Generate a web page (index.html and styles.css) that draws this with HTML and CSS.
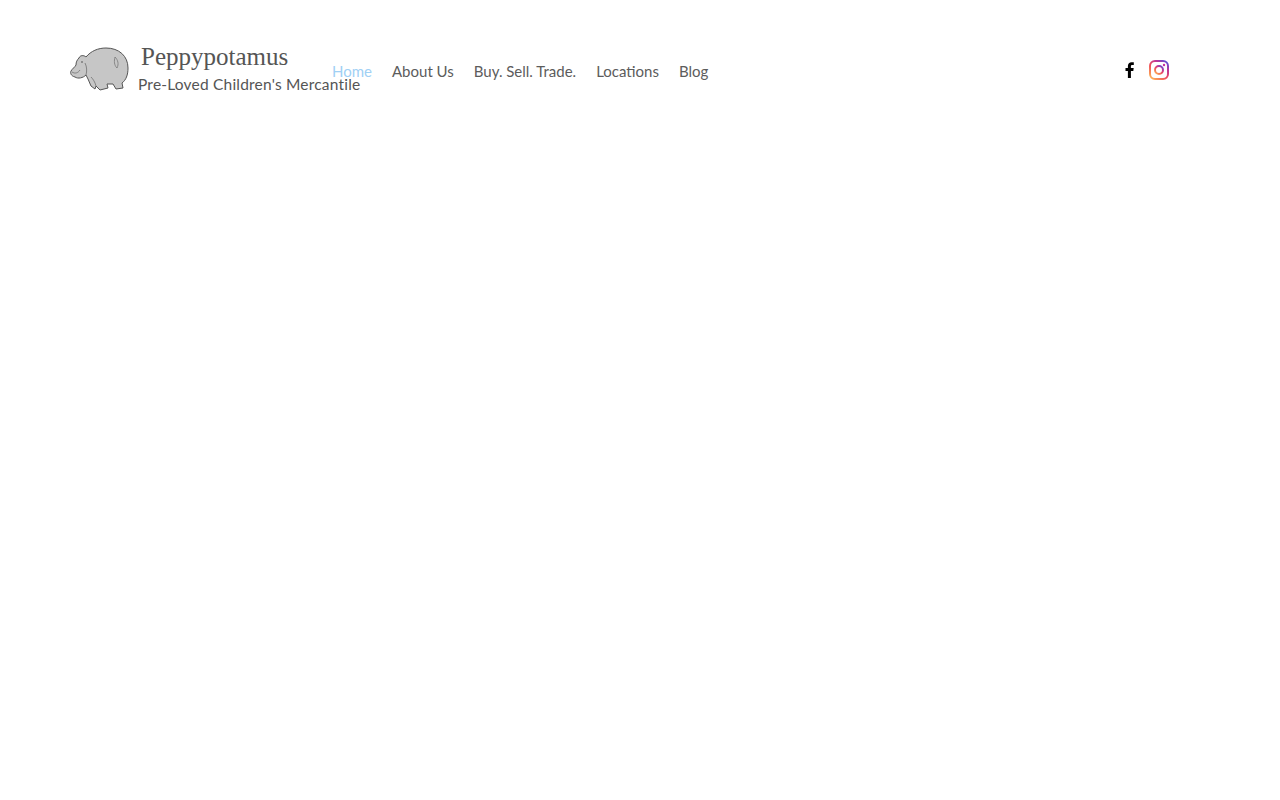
FILE: index.html
```html
<!DOCTYPE html>
<html>
<head>
    <title>Peppypotamus</title>
    <link rel="stylesheet" href="styles.css">
</head>
<body>
    <header class="site-header">
        <svg class="logo" width="60" height="44" viewBox="0 0 60 44">
            <path d="M9 11 C10 8 14 8 16 10 C21 4 28 1 36 1 C49 1 58 9 58 21 C58 28 56 33 52 36 L53 41 L46 42 L43 37 L37 37 L38 41 L30 43 L26 39 L25 42 L21 39 L18 32 L16 28 C13 31 8 32 5 30 C1 29 0 26 1 24 C2 22 5 20 6 18 C6 15 7 13 9 11 Z" fill="#c6c6c6" stroke="#555" stroke-width="1" stroke-linejoin="round"/>
            <path d="M45 10 C48 13 49 17 47 21 C44 18 44 14 45 10 Z" fill="none" stroke="#777" stroke-width="0.8"/>
            <path d="M2 25 C5 27 8 26 10 23 M16 28 C17 24 17 20 15 16 M26 39 C25 35 23 32 21 30" fill="none" stroke="#666" stroke-width="0.7"/>
            <circle cx="12" cy="15" r="0.8" fill="#444"/>
        </svg>
        <div class="brand">
            <div class="brand-name">Peppypotamus</div>
            <div class="brand-tag">Pre-Loved Children's Mercantile</div>
        </div>
        <nav class="nav">
            <a class="nav-item active" href="#">Home</a>
            <a class="nav-item" href="#">About Us</a>
            <a class="nav-item" href="#">Buy. Sell. Trade.</a>
            <a class="nav-item" href="#">Locations</a>
            <a class="nav-item" href="#">Blog</a>
        </nav>
        <div class="social">
            <svg width="20" height="20" viewBox="0 0 20 20">
                <path d="M11.9 18V10.9H14.3L14.7 8H11.9V6.3C11.9 5.5 12.1 4.9 13.3 4.9H14.8V2.3C14.5 2.3 13.6 2.2 12.6 2.2C10.4 2.2 8.9 3.5 8.9 6V8H6.5V10.9H8.9V18Z" fill="#000"/>
            </svg>
            <svg width="20" height="20" viewBox="0 0 20 20">
                <defs>
                    <linearGradient id="ig" x1="0.1" y1="1" x2="0.9" y2="0">
                        <stop offset="0" stop-color="#fdb255"/>
                        <stop offset="0.45" stop-color="#ee4a5e"/>
                        <stop offset="0.75" stop-color="#b9359b"/>
                        <stop offset="1" stop-color="#5b51d8"/>
                    </linearGradient>
                </defs>
                <rect x="1" y="1" width="18" height="18" rx="5" fill="none" stroke="url(#ig)" stroke-width="2"/>
                <circle cx="10" cy="10" r="4" fill="none" stroke="url(#ig)" stroke-width="2"/>
                <circle cx="15" cy="5" r="1.2" fill="#c5339a"/>
            </svg>
        </div>
    </header>
</body>
</html>
```

FILE: styles.css
```css
body {
    margin: 0;
    background: #fff;
    font-family: Lato, "Open Sans", sans-serif;
}
.site-header {
    display: flex;
    align-items: flex-start;
    width: 1169px;
    height: 100px;
    padding: 47px 0 0 70px;
    box-sizing: border-box;
}
.logo {
    flex: none;
}
.brand {
    width: 194px;
    margin-left: 8px;
    white-space: nowrap;
    color: #555;
}
.brand-name {
    margin-left: 3px;
    font-family: "Liberation Serif", serif;
    font-size: 25px;
    line-height: 20px;
}
.brand-tag {
    margin-top: 7px;
    font-size: 15.5px;
    letter-spacing: 0.2px;
    line-height: 20px;
}
.nav {
    display: flex;
    gap: 20px;
    margin-top: 14px;
    font-size: 15px;
    line-height: 20px;
}
.nav-item {
    color: #5c5c5c;
    text-decoration: none;
}
.nav-item.active {
    color: #a0d0f5;
}
.social {
    display: flex;
    gap: 10px;
    margin-left: auto;
    margin-top: 13px;
}
```
